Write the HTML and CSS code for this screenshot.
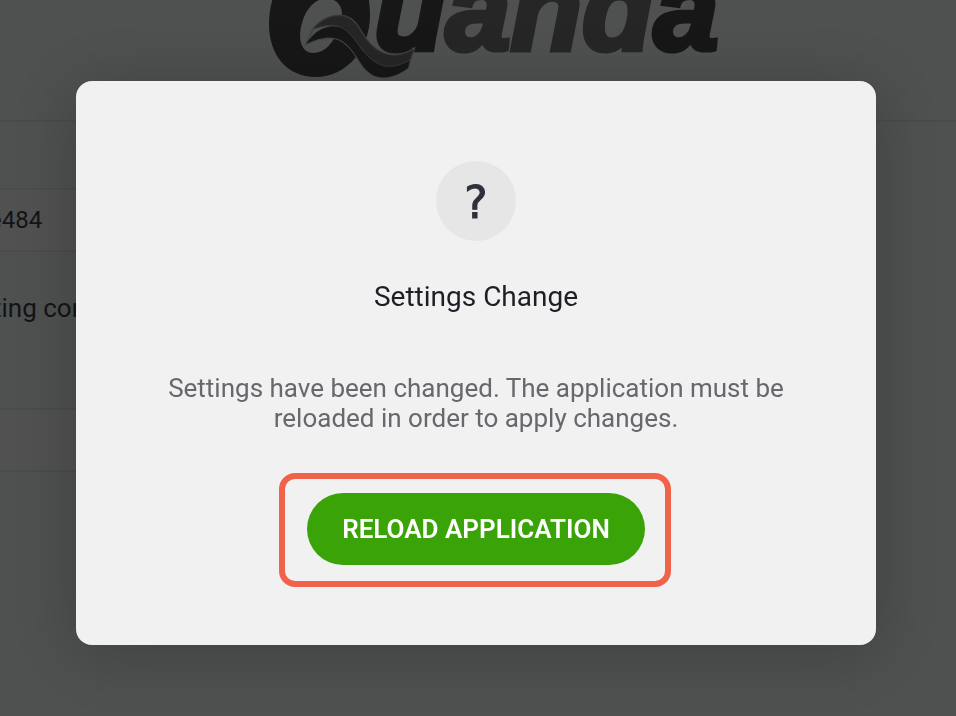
FILE: index.html
```html
<!DOCTYPE html>
<html lang="en">
<head>
<meta charset="utf-8">
<title>Settings Change</title>
<link rel="stylesheet" href="styles.css">
</head>
<body>
<div class="page">
  <header class="header">
    <svg class="logo" viewBox="0 0 460 80" role="img" aria-label="Quanda">
      <path class="ring" fill-rule="evenodd" d="M3 24C3-12 25-46 56-46C87-46 104-20 104 15C104 50 80 77 50 77C21 77 3 55 3 24ZM36 23C31 40 36 53 47 53C59 53 68 43 74 25C80 8 72 0 62-2C50-2 40 8 36 23Z"/>
      <text class="word" x="108" y="50">u<tspan class="soft">and</tspan>a</text>
      <path class="edge" d="M40 44L47 29C58 15 81 8 93 28C106 52 124 63 148 49L142 68C124 81 106 82 94 62C80 38 68 31 40 44Z"/>
      <path class="tail" d="M40 44C52 24 74 20 86 36C101 58 114 74 144 60L142 68C124 81 106 82 94 62C80 38 68 31 40 44Z"/>
      <path class="wave" d="M47 29C58 15 81 8 93 28C106 52 124 63 148 49L144 60C120 73 107 66 89 40C74 20 62 25 47 29Z"/>
    </svg>
  </header>
  <form class="settings">
    <input class="field" type="text" value="e484" aria-label="Device identifier">
    <label class="caption" for="reporting">ting configuration</label>
    <input class="field" type="text" id="reporting">
  </form>
</div>
<div class="overlay">
  <section class="modal" role="dialog" aria-modal="true" aria-labelledby="title" aria-describedby="message">
    <div class="badge" aria-hidden="true">?</div>
    <h1 class="title" id="title">Settings Change</h1>
    <p class="message" id="message">Settings have been changed. The application must be reloaded in order to apply changes.</p>
    <div class="highlight"><button class="reload" type="button">RELOAD APPLICATION</button></div>
  </section>
</div>
</body>
</html>
```
FILE: styles.css
```css
* { box-sizing: border-box; }
body {
  margin: 0;
  min-height: 100vh;
  overflow: hidden;
  background: #4e514f;
  color: #131416;
  font-family: Roboto, sans-serif;
}
.header {
  height: 122px;
  padding-left: 266px;
  border-bottom: 2px solid #4a4b50;
}
.logo { display: block; width: 460px; height: 80px; overflow: hidden; }
.ring { fill: #171717; }
.word {
  font: italic 700 117px "Liberation Sans", sans-serif;
  fill: #171717;
  stroke: #171717;
  stroke-width: 5;
}
.soft { fill: #262626; stroke: #262626; }
.edge { fill: none; stroke: #444645; stroke-width: 2; }
.tail { fill: #171717; }
.wave { fill: #262626; stroke: #363737; }
.settings {
  display: flex;
  flex-direction: column;
  width: 80%;
  margin-left: -36px;
  padding-top: 66px;
}
.field {
  width: 100%;
  height: 64px;
  padding: 0 23px;
  border: 2px solid #4a4b50;
  background: #525151;
  color: #131416;
  font: 24px Roboto, sans-serif;
}
.caption { padding: 40px 29px 84px; font-size: 26px; line-height: 32px; }
.overlay {
  position: fixed;
  inset: 0;
  display: flex;
  justify-content: center;
  align-items: flex-start;
  padding: 81px 80px 0 76px;
}
.modal {
  display: flex;
  flex-direction: column;
  align-items: center;
  width: 100%;
  max-width: 800px;
  padding: 80px 80px 58px;
  border-radius: 16px;
  background: #f1f1f1;
  box-shadow: 0 8px 64px rgba(0, 0, 0, 0.2);
  text-align: center;
}
.badge {
  width: 80px;
  height: 80px;
  border-radius: 50%;
  background: #e6e6e6;
  color: #2d303d;
  font-family: "DejaVu Sans", sans-serif;
  font-size: 44px;
  line-height: 84px;
  -webkit-text-stroke: 1px #2d303d;
}
.title {
  margin: 40px 0 60px;
  color: #1e1f26;
  font-size: 28px;
  font-weight: 400;
  line-height: 32px;
}
.message {
  margin: 0 0 40px;
  color: #66686d;
  font-size: 26px;
  line-height: 30px;
}
.highlight {
  margin-right: 2px;
  padding: 14px 20px 16px 22px;
  border: 6px solid #f1624b;
  border-radius: 16px;
}
.reload {
  height: 72px;
  padding: 0 35px;
  border: 0;
  border-radius: 36px;
  background: #39a307;
  color: #fff;
  font: 600 26px Roboto, sans-serif;
}
```
